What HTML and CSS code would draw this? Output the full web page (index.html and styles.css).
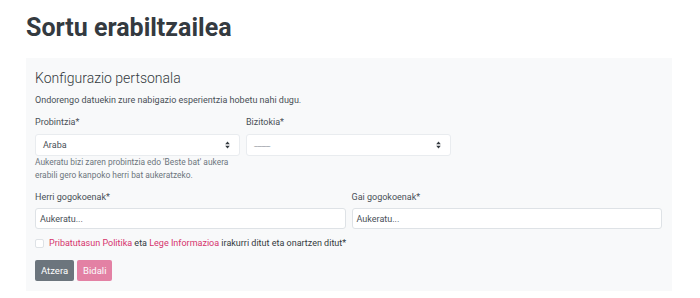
FILE: index.html
```html
<!DOCTYPE html>
<html lang="eu">
  <head>
    <meta charset="UTF-8" />
    <meta name="viewport" content="width=device-width, initial-scale=1.0" />
    <title>Sortu erabiltzailea</title>
    <link rel="stylesheet" href="styles.css">
  </head>
  <body>
    <div class="page">
      <h1 class="page-title">Sortu erabiltzailea</h1>
      <form class="card">
        <h2 class="card-title">Konfigurazio pertsonala</h2>
        <p class="card-lead">Ondorengo datuekin zure nabigazio esperientzia hobetu nahi dugu.</p>

        <div class="form-row cols-3">
          <div class="form-group">
            <label class="form-label">Probintzia*</label>
            <div class="select">
              <span>Araba</span>
              <svg class="select-arrow" width="5" height="8" viewBox="0 0 5 8">
                <path d="M2.5 0.5 L4.8 3.2 H0.2 Z M2.5 7.5 L4.8 4.8 H0.2 Z" fill="#343a40" />
              </svg>
            </div>
            <small class="help">Aukeratu bizi zaren probintzia edo 'Beste bat' aukera erabili gero kanpoko herri bat aukeratzeko.</small>
          </div>
          <div class="form-group">
            <label class="form-label">Bizitokia*</label>
            <div class="select">
              <span class="placeholder-dash">---------------</span>
              <svg class="select-arrow" width="5" height="8" viewBox="0 0 5 8">
                <path d="M2.5 0.5 L4.8 3.2 H0.2 Z M2.5 7.5 L4.8 4.8 H0.2 Z" fill="#343a40" />
              </svg>
            </div>
          </div>
        </div>

        <div class="form-row cols-2">
          <div class="form-group tight">
            <label class="form-label">Herri gogokoenak*</label>
            <div class="input">Aukeratu...</div>
          </div>
          <div class="form-group tight">
            <label class="form-label">Gai gogokoenak*</label>
            <div class="input">Aukeratu...</div>
          </div>
        </div>

        <label class="check">
          <span class="check-box"></span>
          <span><a href="#">Pribatutasun Politika</a> eta <a href="#">Lege Informazioa</a> irakurri ditut eta onartzen ditut*</span>
        </label>

        <div class="actions">
          <button type="button" class="btn btn-secondary">Atzera</button>
          <button type="submit" class="btn btn-primary" disabled>Bidali</button>
        </div>
      </form>
    </div>
  </body>
</html>
```

FILE: styles.css
```css
* {
  margin: 0;
  padding: 0;
  box-sizing: border-box;
}
body {
  background: #fff;
  font-family: Roboto, "Liberation Sans", sans-serif;
  color: #343a40;
}
.page {
  padding: 13px 28px 0 26px;
}
.page-title {
  font-family: Roboto, sans-serif;
  font-weight: 700;
  font-size: 25px;
  line-height: 30px;
  color: #343a40;
  margin-bottom: 15px;
}
.card {
  background: #f8f9fa;
  padding: 12px 10px 10px 9px;
}
.card-title {
  font-weight: 300;
  font-size: 14px;
  line-height: 17px;
  color: #343a40;
  margin-bottom: 7px;
}
.card-lead {
  font-size: 9px;
  line-height: 13px;
  color: #495057;
  margin-bottom: 9px;
}
.form-row {
  display: grid;
  gap: 6px;
}
.cols-3 {
  grid-template-columns: repeat(3, 1fr);
}
.cols-2 {
  grid-template-columns: repeat(2, 1fr);
}
.form-group {
  display: flex;
  flex-direction: column;
  margin-bottom: 9px;
}
.form-group.tight {
  margin-bottom: 8px;
}
.form-label {
  font-size: 9px;
  line-height: 13px;
  color: #495057;
  margin-bottom: 5px;
}
.tight .form-label {
  margin-bottom: 4px;
}
.select {
  display: flex;
  align-items: center;
  justify-content: space-between;
  height: 22px;
  padding: 0 9px 0 7px;
  background: #fff;
  border: 1px solid #e9ecef;
  border-radius: 3px;
  font-size: 9px;
  color: #495057;
}
.placeholder-dash {
  color: #6c757d;
  font-size: 6px;
  letter-spacing: -0.6px;
}
.help {
  font-size: 8.4px;
  line-height: 13px;
  color: #6c757d;
  padding-right: 10px;
}
.input {
  display: flex;
  align-items: center;
  height: 21px;
  padding: 0 4px;
  background: #fff;
  border: 1px solid #dee2e6;
  border-radius: 3px;
  font-size: 9px;
  color: #495057;
}
.check {
  display: flex;
  align-items: center;
  gap: 5px;
  font-size: 9px;
  line-height: 13px;
  color: #343a40;
  margin-bottom: 10px;
}
.check-box {
  width: 9px;
  height: 9px;
  background: #fff;
  border: 1px solid #dee2e6;
  border-radius: 2px;
}
.check a {
  color: #d6336c;
  text-decoration: none;
}
.actions {
  display: flex;
  gap: 3px;
}
.btn {
  height: 21px;
  padding: 0 5px;
  border: 1px solid transparent;
  border-radius: 2px;
  font-family: Roboto, sans-serif;
  font-size: 9.5px;
  color: #fff;
}
.btn-secondary {
  background: #6c757d;
}
.btn-primary {
  background: #d6336c;
  opacity: 0.6;
}
```
